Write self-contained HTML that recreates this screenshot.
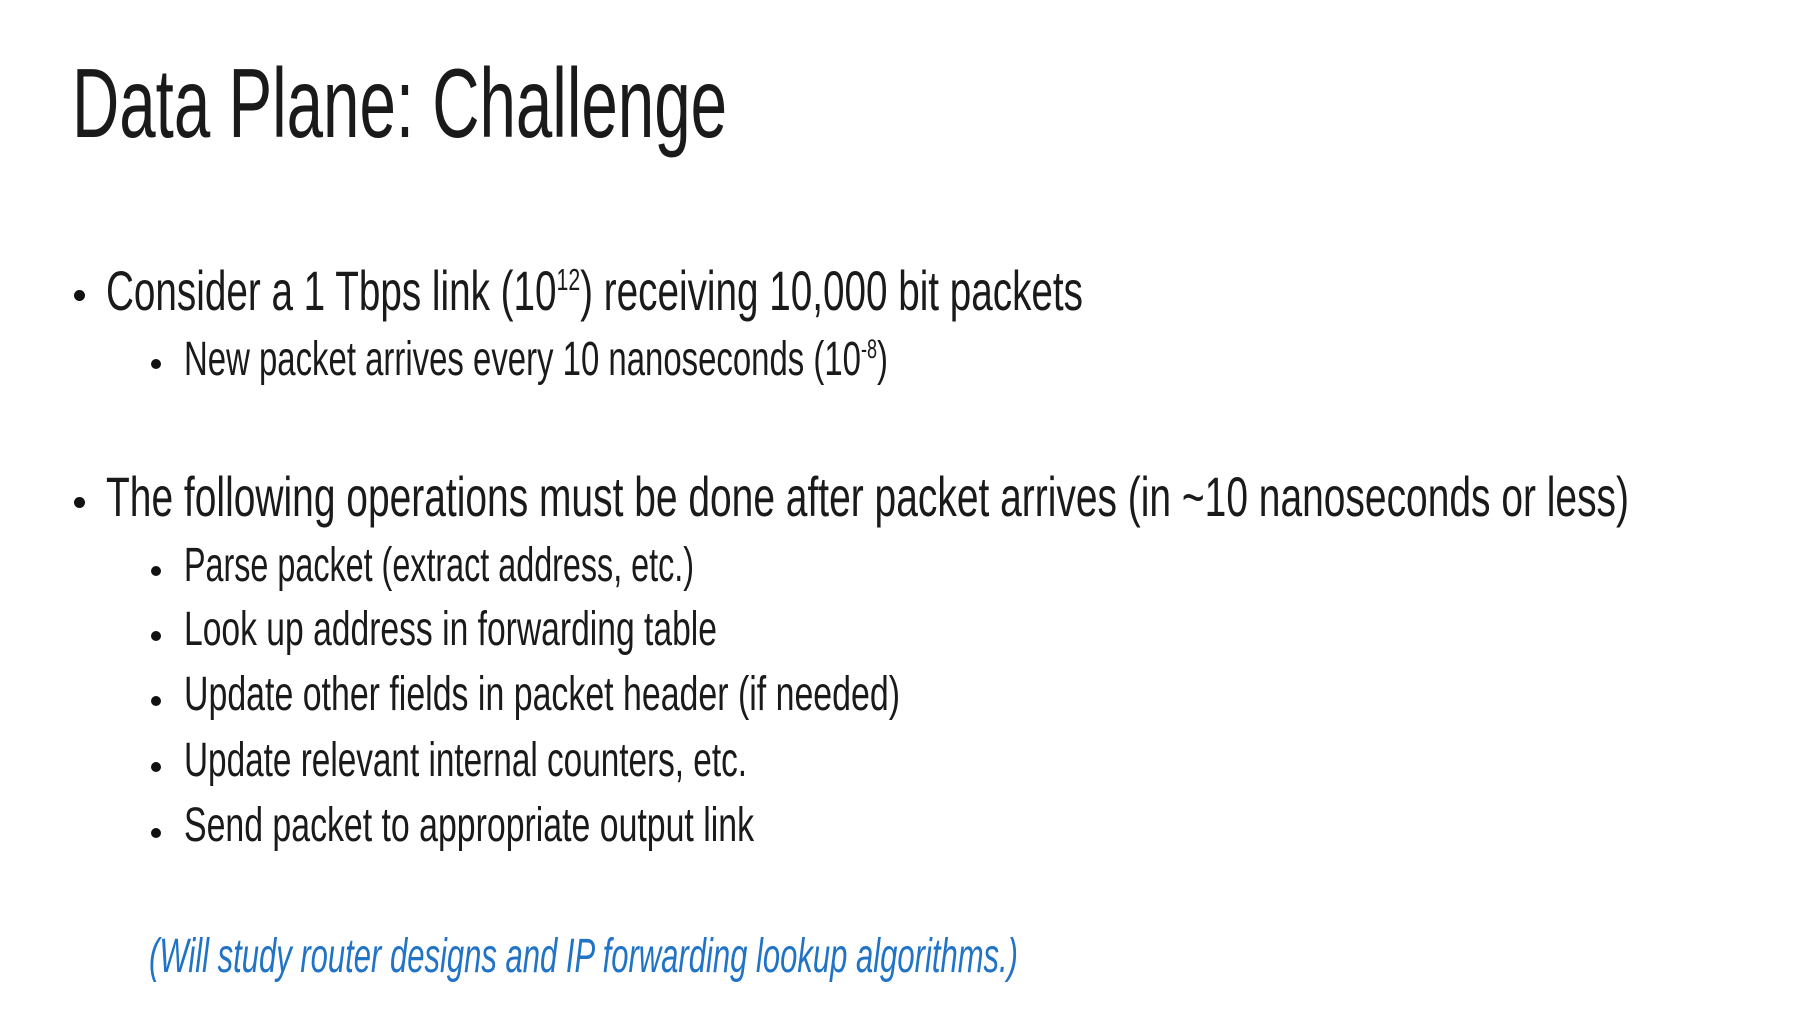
<!DOCTYPE html>
<html><head><meta charset="utf-8">
<style>
html,body{margin:0;padding:0;background:#fff;}
body{width:1798px;height:1011px;position:relative;overflow:hidden;font-family:"Liberation Sans Narrow","Liberation Sans",sans-serif;color:#1a1a1a;}
.t{position:absolute;white-space:nowrap;transform-origin:0 0;line-height:1;}
.b{position:absolute;border-radius:50%;background:#111;}
sup{font-size:0.55em;vertical-align:0;position:relative;top:-0.65em;}
</style></head><body>
<div class="t" id="e0" style="left:72px;top:54px;font-size:98px;">Data Plane: Challenge</div>

<div class="b" style="left:74px;top:290px;width:11px;height:11px;"></div>
<div class="t" id="e1" style="left:106px;top:263px;font-size:56px;">Consider a 1 Tbps link (10<sup>12</sup>) receiving 10,000 bit packets</div>
<div class="b" style="left:151px;top:359px;width:10px;height:10px;"></div>
<div class="t" id="e2" style="left:184px;top:336px;font-size:48px;">New packet arrives every 10 nanoseconds (10<sup>-8</sup>)</div>

<div class="b" style="left:74px;top:497px;width:11px;height:11px;"></div>
<div class="t" id="e3" style="left:106px;top:469px;font-size:56px;">The following operations must be done after packet arrives (in ~10 nanoseconds or less)</div>
<div class="b" style="left:151px;top:566px;width:10px;height:10px;"></div>
<div class="t" id="e4" style="left:184px;top:542px;font-size:48px;">Parse packet (extract address, etc.)</div>
<div class="b" style="left:151px;top:631px;width:10px;height:10px;"></div>
<div class="t" id="e5" style="left:184px;top:606px;font-size:48px;">Look up address in forwarding table</div>
<div class="b" style="left:151px;top:696px;width:10px;height:10px;"></div>
<div class="t" id="e6" style="left:184px;top:671px;font-size:48px;">Update other fields in packet header (if needed)</div>
<div class="b" style="left:151px;top:762px;width:10px;height:10px;"></div>
<div class="t" id="e7" style="left:184px;top:737px;font-size:48px;">Update relevant internal counters, etc.</div>
<div class="b" style="left:151px;top:828px;width:10px;height:10px;"></div>
<div class="t" id="e8" style="left:184px;top:802px;font-size:48px;">Send packet to appropriate output link</div>

<div class="t" id="e9" style="left:149px;top:933px;font-size:48px;font-style:italic;color:#2173c6;">(Will study router designs and IP forwarding lookup algorithms.)</div>
<script>
var W=[655,977,704,1523,510,533,716,563,570,869];
for(var i=0;i<W.length;i++){var el=document.getElementById('e'+i);var w=el.getBoundingClientRect().width;if(w>0)el.style.transform='scaleX('+(W[i]/w)+')';}
</script>
</body></html>
